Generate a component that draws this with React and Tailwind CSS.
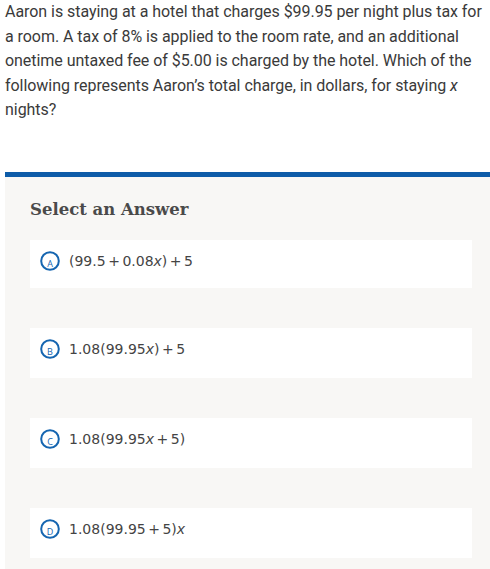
import React from "react";

const answers = [
  { letter: "A", h: "h-[48px]", parts: ["(99.5", "+", "0.08", "x", ")", "+", "5"] },
  { letter: "B", h: "h-[50px]", parts: ["1.08(99.95", "x", ")", "+", "5"] },
  { letter: "C", h: "h-[50px]", parts: ["1.08(99.95", "x", "+", "5)"] },
  { letter: "D", h: "h-[50px]", parts: ["1.08(99.95", "+", "5)", "x"] },
];

const LetterCircle = ({ letter }) => (
  <svg width="20" height="20" viewBox="0 0 20 20" className="shrink-0">
    <circle cx="10" cy="10" r="8.8" fill="none" stroke="#1565b0" strokeWidth="2" />
    <text
      x="10"
      y="15.5"
      textAnchor="middle"
      fontSize="9"
      fontFamily="'Open Sans', sans-serif"
      fill="#1565b0"
    >
      {letter}
    </text>
  </svg>
);

// render a math expression: "+" gets a little space, "x" is italic
const MathExpr = ({ parts }) => (
  <span className="ml-[9px] text-[14px] leading-[20px] text-[#444] font-['DejaVu_Sans',sans-serif] whitespace-pre">
    {parts.map((p, i) =>
      p === "+" ? (
        <span key={i} className="mx-[2.5px]">+</span>
      ) : p === "x" ? (
        <i key={i}>x</i>
      ) : (
        <span key={i}>{p}</span>
      )
    )}
  </span>
);

export default function App() {
  return (
    <div className="w-[490px] min-h-[569px] bg-white">
      {/* Question */}
      <p className="pl-[5px] pr-0 pt-0 text-[16px] leading-[24.5px] tracking-[-0.05px] text-[#3a3a3a] font-['Roboto',sans-serif]">
        Aaron is staying at a hotel that charges $99.95 per night plus tax for a room. A tax of 8% is applied to the
        room rate, and an additional onetime untaxed fee of $5.00 is charged by the hotel. Which of the following
        represents Aaron’s total charge, in dollars, for staying <i>x</i> nights?
      </p>

      {/* Answer panel */}
      <div className="ml-[5px] mt-[49px] border-t-[5px] border-[#0e5ca8] bg-[#f8f7f5] pl-[25px] pr-[18px] pb-[12px]">
        <h2 className="pt-[21px] text-[16.5px] leading-[24px] font-bold text-[#4a4a4a] font-['DejaVu_Serif',serif]">
          Select an Answer
        </h2>
        <div className="mt-[18px] flex flex-col gap-[40px]">
          {answers.map((a) => (
            <div key={a.letter} className={`${a.h} bg-white flex items-start pt-[11px] pl-[10px]`}>
              <LetterCircle letter={a.letter} />
              <MathExpr parts={a.parts} />
            </div>
          ))}
        </div>
      </div>
    </div>
  );
}
